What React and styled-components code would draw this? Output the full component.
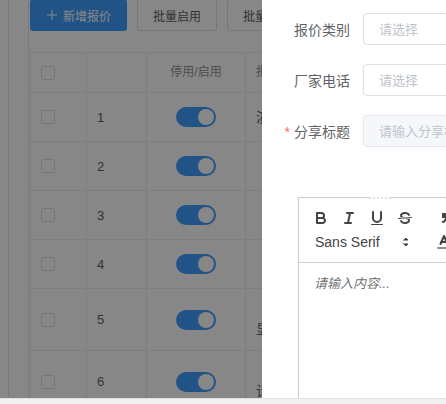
import React from 'react';
import styled, { createGlobalStyle } from 'styled-components';

const GlobalStyle = createGlobalStyle`
  html, body {
    margin: 0;
    height: 100%;
    overflow: hidden;
    background: #fff;
  }
  body {
    font-family: "Liberation Sans", "Noto Sans CJK SC", sans-serif;
  }
`;

const FONT = `"Liberation Sans", "Noto Sans CJK SC", sans-serif`;

const Screen = styled.div`
  height: 100vh;
  display: flex;
  flex-direction: column;
`;

const Stage = styled.div`
  flex: 1;
  min-height: 0;
  display: flex;
`;

const ScrollBar = styled.div`
  height: 6px;
  flex-shrink: 0;
  box-sizing: border-box;
  background: #f1f1f1;
  border-top: 1px solid #e3e3e3;
`;

/* list page behind the drawer */
const PagePane = styled.div`
  position: relative;
  width: 262px;
  flex-shrink: 0;
  overflow: hidden;
  background: #fff;
`;

const Mask = styled.div`
  position: absolute;
  inset: 0;
  background: rgba(0, 0, 0, 0.47);
`;

const Shell = styled.div`
  height: 100%;
  margin-left: 8px;
  padding-left: 19px;
  border-left: 1px solid #e6e6e6;
`;

const Main = styled.div`
  height: 100%;
  padding-left: 1px;
  border-left: 1px solid #e6e6e6;
`;

const Actions = styled.div`
  display: flex;
  gap: 10px;
  margin-top: -1px;
  width: 600px;
`;

const Button = styled.button`
  height: 32px;
  width: ${p => p.$w}px;
  flex-shrink: 0;
  display: flex;
  align-items: center;
  justify-content: center;
  gap: 5px;
  padding: 0;
  border-radius: 3px;
  font: 12px ${FONT};
  border: 1px solid ${p => (p.$primary ? '#409eff' : '#dcdfe6')};
  background: ${p => (p.$primary ? '#409eff' : '#fff')};
  color: ${p => (p.$primary ? '#fff' : '#606266')};
`;

const Table = styled.table`
  margin-top: 21px;
  width: 640px;
  table-layout: fixed;
  border-collapse: collapse;
  border: 1px solid #ebeef5;
  font-family: ${FONT};
`;

const Th = styled.th`
  padding: 12px 10px;
  line-height: 15px;
  font-size: 12px;
  font-weight: normal;
  color: #909399;
  text-align: ${p => (p.$center ? 'center' : 'left')};
  border-right: 1px solid #ebeef5;
  border-bottom: 1px solid #ebeef5;
`;

const Td = styled.td`
  padding: 12px 10px;
  font-size: 13px;
  color: #606266;
  vertical-align: middle;
  text-align: ${p => (p.$center ? 'center' : 'left')};
  border-right: 1px solid #ebeef5;
  border-bottom: 1px solid #ebeef5;
`;

const CellBox = styled.div`
  min-height: 24px;
  display: flex;
  align-items: center;
  justify-content: ${p => (p.$center ? 'center' : 'flex-start')};
`;

const Desc = styled.div`
  font-size: 14px;
  line-height: 18.5px;
  text-indent: ${p => (p.$indent ? '2em' : '0')};
`;

const Checkbox = styled.span`
  display: inline-block;
  width: 14px;
  height: 14px;
  box-sizing: border-box;
  border: 1px solid #dcdfe6;
  border-radius: 2px;
  background: #fff;
  vertical-align: middle;
`;

const Switch = styled.span`
  position: relative;
  display: inline-block;
  width: 40px;
  height: 20px;
  border-radius: 10px;
  background: #409eff;

  &::after {
    content: '';
    position: absolute;
    top: 2px;
    left: 22px;
    width: 16px;
    height: 16px;
    border-radius: 50%;
    background: #fff;
  }
`;

/* drawer */
const Drawer = styled.aside`
  flex: 1;
  min-width: 0;
  overflow: hidden;
  background: #fff;
  box-shadow: -2px 0 4px rgba(0, 0, 0, 0.18);
  padding-top: 13px;
  font-family: ${FONT};
`;

const FormItem = styled.div`
  display: flex;
  align-items: center;
  margin-bottom: 19px;
`;

const Label = styled.label`
  width: 101px;
  flex-shrink: 0;
  box-sizing: border-box;
  padding-right: 13px;
  text-align: right;
  font-size: 14px;
  color: #606266;
`;

const Star = styled.span`
  color: #f56c6c;
  margin-right: 4px;
`;

const Input = styled.input`
  width: 300px;
  height: 32px;
  flex-shrink: 0;
  box-sizing: border-box;
  padding: 0 15px;
  border: 1px solid ${p => (p.disabled ? '#e4e7ed' : '#dcdfe6')};
  border-radius: 4px;
  background: ${p => (p.disabled ? '#f5f7fa' : '#fff')};
  font: 13px ${FONT};
  outline: none;

  &::placeholder {
    color: #c0c4cc;
  }
`;

const Editor = styled.div`
  position: relative;
  margin: 50px 0 0 36px;
  width: 600px;
  height: 320px;
  border: 1px solid #ccc;
`;

const Grip = styled.span`
  position: absolute;
  top: -1px;
  left: 70px;
  width: 22px;
  height: 2px;
  background: #fff;
  border-top: 2px dotted #e2e2e2;
  box-sizing: border-box;
`;

const Toolbar = styled.div`
  padding: 8px;
  border-bottom: 1px solid #ccc;
  display: flex;
  flex-direction: column;
`;

const ToolRow = styled.div`
  display: flex;
  height: 24px;
`;

const Group = styled.span`
  display: flex;
  margin-right: 15px;
`;

const ToolButton = styled.span`
  width: 28px;
  height: 24px;
  box-sizing: border-box;
  padding: 3px 5px;
  display: inline-flex;

  svg {
    width: 18px;
    height: 18px;
  }
`;

const Picker = styled.span`
  position: relative;
  width: 108px;
  height: 24px;
  padding-left: 8px;
  box-sizing: border-box;
  display: flex;
  align-items: center;
  font: 500 14px "Liberation Sans", Arial, sans-serif;
  color: #444;

  svg {
    position: absolute;
    right: 0;
    top: 3px;
    width: 18px;
    height: 18px;
  }
`;

const Content = styled.div`
  padding: 12px 15px;
  font-size: 13px;
  line-height: 1.42;
  font-style: italic;
  color: rgba(0, 0, 0, 0.6);
`;

const stroke = { fill: 'none', stroke: '#444', strokeWidth: 2, strokeLinecap: 'round', strokeLinejoin: 'round' };
const thin = { ...stroke, strokeWidth: 1 };

const PlusIcon = () => (
  <svg width="12" height="12" viewBox="0 0 12 12">
    <path d="M6 1v10M1 6h10" stroke="#fff" strokeWidth="1.1" />
  </svg>
);

const BoldIcon = () => (
  <svg viewBox="0 0 18 18">
    <path style={stroke} d="M5,4H9.5A2.5,2.5,0,0,1,12,6.5v0A2.5,2.5,0,0,1,9.5,9H5V4Z" />
    <path style={stroke} d="M5,9h5.5A2.5,2.5,0,0,1,13,11.5v0A2.5,2.5,0,0,1,10.5,14H5V9Z" />
  </svg>
);

const ItalicIcon = () => (
  <svg viewBox="0 0 18 18">
    <line style={stroke} x1="7" x2="13" y1="4" y2="4" />
    <line style={stroke} x1="5" x2="11" y1="14" y2="14" />
    <line style={stroke} x1="8" x2="10" y1="14" y2="4" />
  </svg>
);

const UnderlineIcon = () => (
  <svg viewBox="0 0 18 18">
    <path style={stroke} d="M5,3V9a4.012,4.012,0,0,0,4,4H9a4.012,4.012,0,0,0,4-4V3" />
    <rect fill="#444" x="3" y="15" width="12" height="1" rx="0.5" />
  </svg>
);

const StrikeIcon = () => (
  <svg viewBox="0 0 18 18">
    <line style={thin} x1="15.5" x2="2.5" y1="8.5" y2="9.5" />
    <path fill="#444" d="M9.007,8C6.542,7.791,6,7.519,6,6.5,6,5.792,7.283,5,9,5c1.571,0,2.765.679,2.969,1.309a1,1,0,0,0,1.9-.617C13.356,4.106,11.354,3,9,3,6.2,3,4,4.538,4,6.5a3.2,3.2,0,0,0,.5,1.843Z" />
    <path fill="#444" d="M8.984,10C11.457,10.208,12,10.479,12,11.5c0,.708-1.283,1.5-3,1.5-1.571,0-2.765-.679-2.969-1.309a1,1,0,1,0-1.9.617C4.644,13.894,6.646,15,9,15c2.8,0,5-1.538,5-3.5a3.2,3.2,0,0,0-.5-1.843Z" />
  </svg>
);

const QuoteIcon = () => (
  <svg viewBox="0 0 18 18">
    <rect fill="#444" stroke="#444" strokeWidth="2" width="3" height="3" x="4" y="5" />
    <rect fill="#444" stroke="#444" strokeWidth="2" width="3" height="3" x="11" y="5" />
    <path style={stroke} d="M7,8c0,4.031-3,5-3,5" />
    <path style={stroke} d="M14,8c0,4.031-3,5-3,5" />
  </svg>
);

const ArrowsIcon = () => (
  <svg viewBox="0 0 18 18">
    <polygon style={{ ...stroke, fill: '#444', strokeWidth: 1 }} points="7 11 9 13 11 11 7 11" />
    <polygon style={{ ...stroke, fill: '#444', strokeWidth: 1 }} points="7 7 9 5 11 7 7 7" />
  </svg>
);

const ColorIcon = () => (
  <svg viewBox="0 0 18 18">
    <line style={{ ...stroke, opacity: 0.6 }} x1="3" x2="15" y1="15" y2="15" />
    <polyline style={stroke} points="5.5 11 9 3 12.5 11" />
    <line style={stroke} x1="11.63" x2="6.38" y1="9" y2="9" />
  </svg>
);

const rows = [
  { id: 1, text: '演示报价' },
  { id: 2, text: '常规报价', indent: true },
  { id: 3, text: '季度报价', indent: true },
  { id: 4, text: '批发报价', indent: true },
  { id: 5, text: '夏季新品上市活动期间显示器统一报价', indent: true },
  { id: 6, text: '会员专享价以门店为准请咨询客服', indent: true },
];

function QuoteList() {
  return (
    <PagePane>
      <Shell>
        <Main>
          <Actions>
            <Button $primary $w={97}><PlusIcon />新增报价</Button>
            <Button $w={80}>批量启用</Button>
            <Button $w={80}>批量停用</Button>
          </Actions>
          <Table>
            <colgroup>
              <col style={{ width: 56 }} />
              <col style={{ width: 60 }} />
              <col style={{ width: 99 }} />
              <col style={{ width: 200 }} />
              <col />
            </colgroup>
            <thead>
              <tr>
                <Th><Checkbox /></Th>
                <Th />
                <Th $center>停用/启用</Th>
                <Th>报价标题</Th>
                <Th>报价类别</Th>
              </tr>
            </thead>
            <tbody>
              {rows.map(r => (
                <tr key={r.id}>
                  <Td><CellBox><Checkbox /></CellBox></Td>
                  <Td><CellBox>{r.id}</CellBox></Td>
                  <Td $center><CellBox $center><Switch /></CellBox></Td>
                  <Td><CellBox><Desc $indent={r.indent}>{r.text}</Desc></CellBox></Td>
                  <Td><CellBox>整车</CellBox></Td>
                </tr>
              ))}
            </tbody>
          </Table>
        </Main>
      </Shell>
      <Mask />
    </PagePane>
  );
}

function QuoteDrawer() {
  return (
    <Drawer>
      <FormItem>
        <Label>报价类别</Label>
        <Input readOnly placeholder="请选择" />
      </FormItem>
      <FormItem>
        <Label>厂家电话</Label>
        <Input readOnly placeholder="请选择" />
      </FormItem>
      <FormItem>
        <Label><Star>*</Star>分享标题</Label>
        <Input disabled placeholder="请输入分享标题" />
      </FormItem>
      <Editor>
        <Grip />
        <Toolbar>
          <ToolRow>
            <Group>
              <ToolButton><BoldIcon /></ToolButton>
              <ToolButton><ItalicIcon /></ToolButton>
              <ToolButton><UnderlineIcon /></ToolButton>
              <ToolButton><StrikeIcon /></ToolButton>
            </Group>
            <Group>
              <ToolButton><QuoteIcon /></ToolButton>
            </Group>
          </ToolRow>
          <ToolRow>
            <Group>
              <Picker>Sans Serif<ArrowsIcon /></Picker>
            </Group>
            <Group>
              <ToolButton><ColorIcon /></ToolButton>
            </Group>
          </ToolRow>
        </Toolbar>
        <Content>请输入内容...</Content>
      </Editor>
    </Drawer>
  );
}

export default function App() {
  return (
    <Screen>
      <GlobalStyle />
      <Stage>
        <QuoteList />
        <QuoteDrawer />
      </Stage>
      <ScrollBar />
    </Screen>
  );
}
